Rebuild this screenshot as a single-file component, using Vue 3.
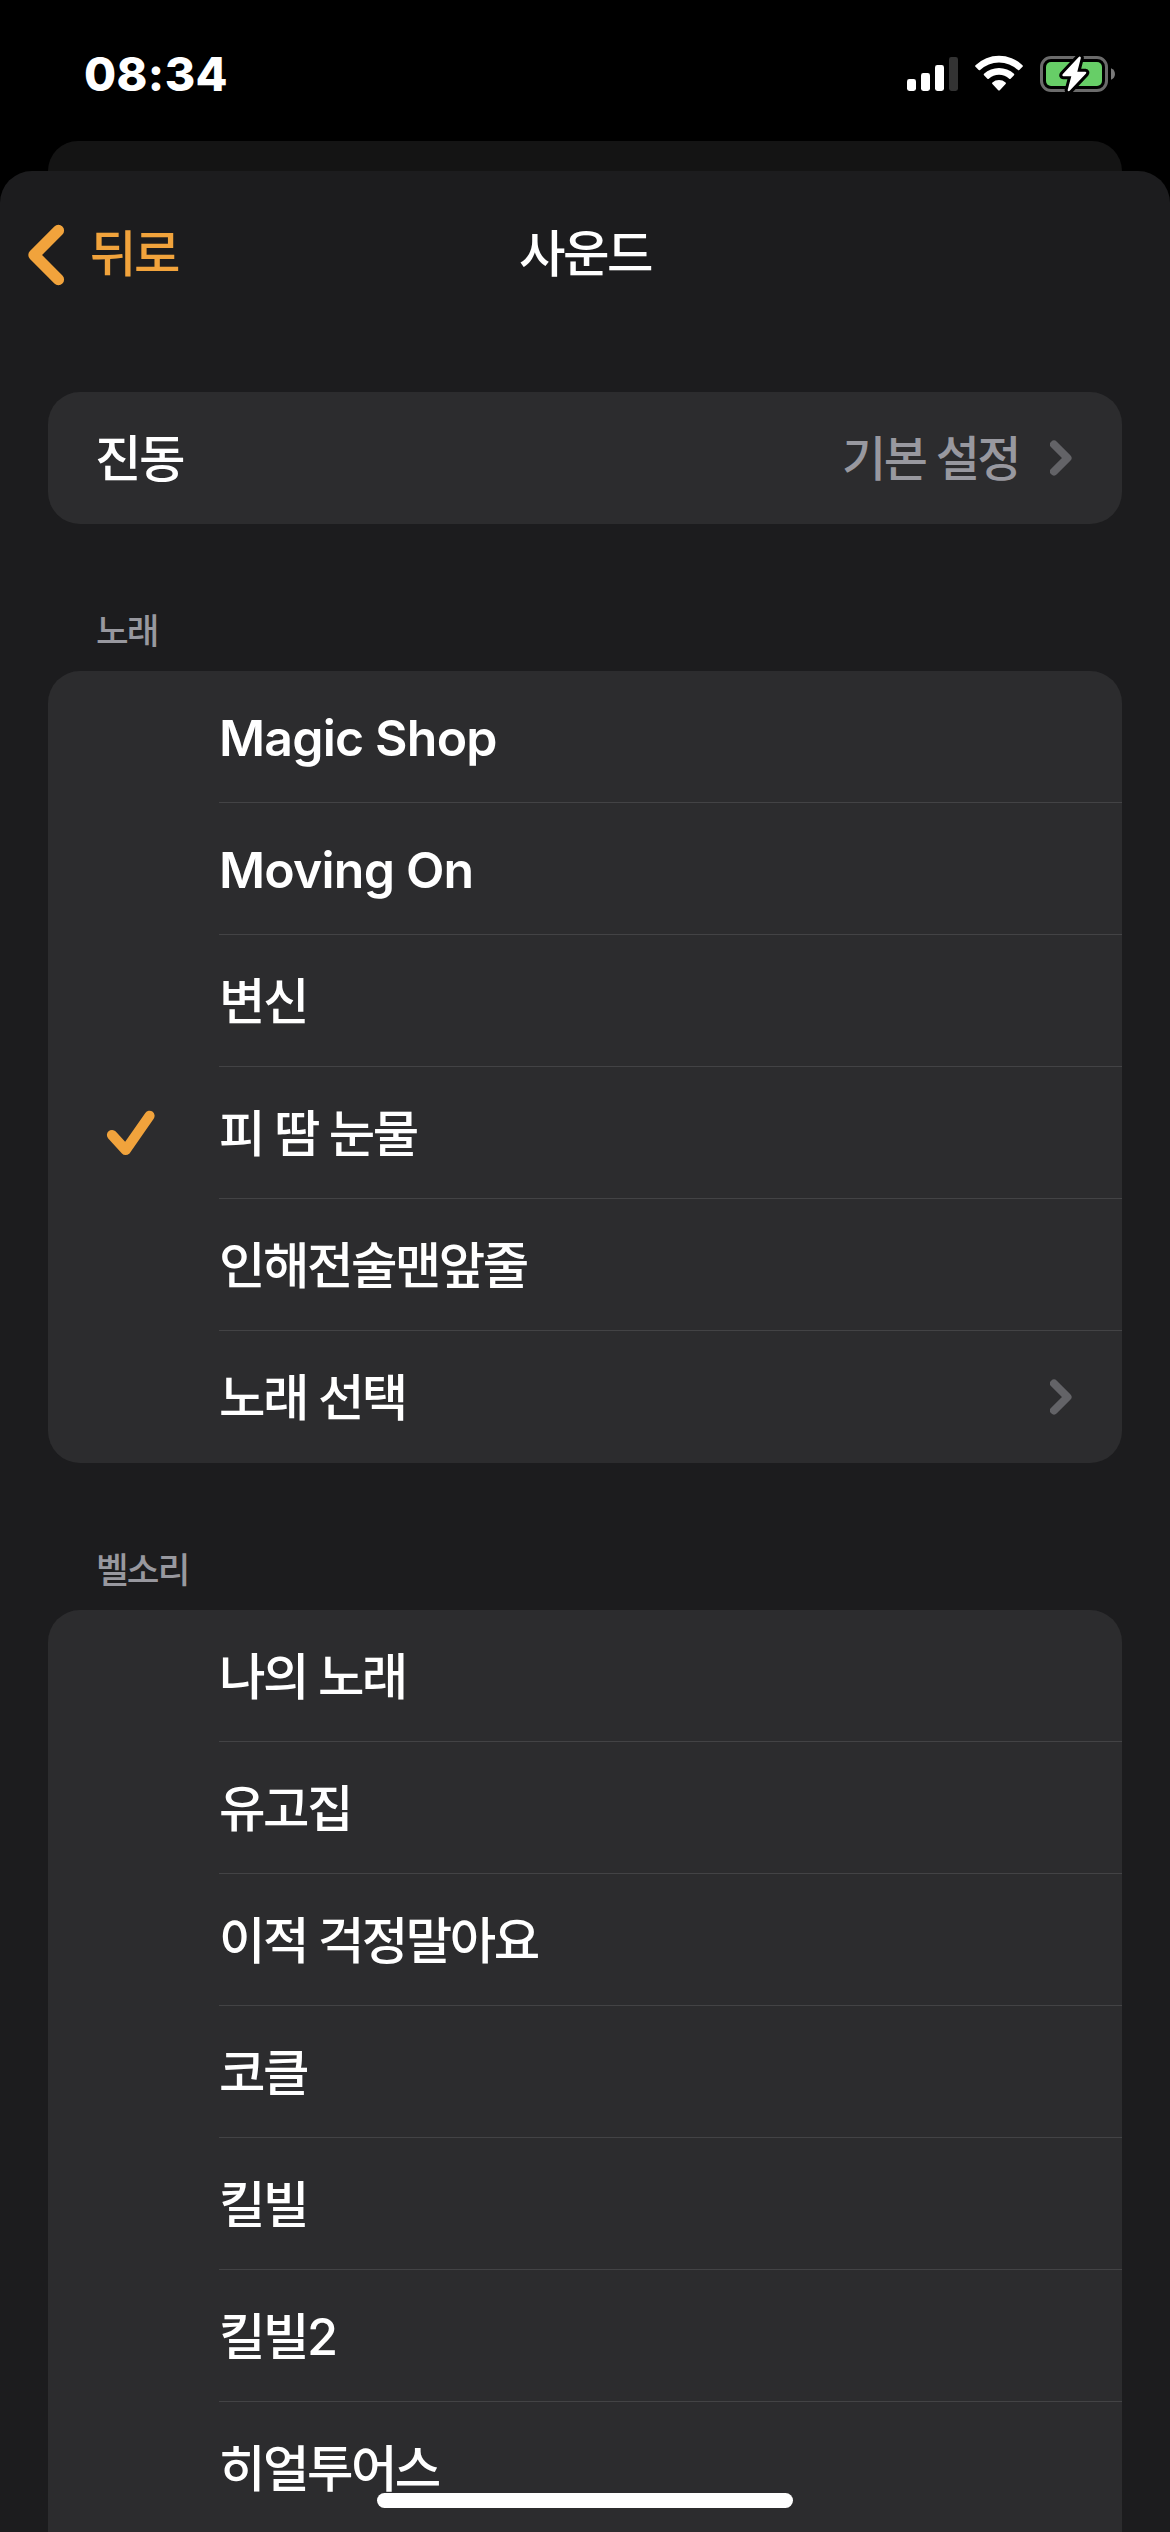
<script setup>
const songs = [
  { name: 'Magic Shop', latin: true },
  { name: 'Moving On', latin: true },
  { name: '변신' },
  { name: '피 땀 눈물', checked: true },
  { name: '인해전술맨앞줄' },
  { name: '노래 선택', more: true },
]

const ringtones = [
  { name: '나의 노래' },
  { name: '유고집' },
  { name: '이적 걱정말아요' },
  { name: '코클' },
  { name: '킬빌' },
  { name: '킬빌2' },
  { name: '히얼투어스' },
]

const sections = [
  { title: '노래', items: songs },
  { title: '벨소리', items: ringtones },
]
</script>

<template>
  <div class="screen">
    <header class="status">
      <span class="time">08:34</span>
      <div class="indicators">
        <svg class="signal" width="51" height="34" viewBox="0 0 51 34">
          <rect x="0" y="22" width="9" height="12" rx="2.4" fill="#fff" />
          <rect x="14" y="16" width="9" height="18" rx="2.4" fill="#fff" />
          <rect x="28" y="8" width="9" height="26" rx="2.4" fill="#fff" />
          <rect x="42" y="0" width="9" height="34" rx="2.4" fill="#333" />
        </svg>
        <svg class="wifi" width="48" height="36" viewBox="0 0 48 36">
          <path d="M0.5 10.2A34 34 0 0 1 47.5 10.2Q48.3 11 47.5 11.8L44.3 15Q43.6 15.6 42.9 15A27.5 27.5 0 0 0 5.1 15Q4.4 15.6 3.7 15L0.5 11.8Q-0.3 11 0.5 10.2Z" fill="#fff" />
          <path d="M9 18.8A22 22 0 0 1 39 18.8Q39.7 19.6 39 20.3L35.6 23.7Q34.9 24.3 34.2 23.7A15 15 0 0 0 13.8 23.7Q13.1 24.3 12.4 23.7L9 20.3Q8.3 19.6 9 18.8Z" fill="#fff" />
          <path d="M17.4 27.4A10.5 10.5 0 0 1 30.6 27.4Q31.4 28.2 30.6 29L24.8 35.2Q24 36 23.2 35.2L17.4 29Q16.6 28.2 17.4 27.4Z" fill="#fff" />
        </svg>
        <svg class="battery" width="76" height="40" viewBox="0 0 76 40">
          <rect x="1.5" y="3.5" width="65" height="33" rx="9.5" fill="none" stroke="#6b6b6b" stroke-width="3" />
          <path d="M71 14.2C76.3 16 76.3 24 71 25.8Z" fill="#7a7a7a" />
          <rect x="6" y="8" width="56" height="24" rx="5" fill="#67ce67" />
          <path d="M38.5 3.2L22.6 20.3Q21.6 22 23.3 22.2H31.3L27.6 36.2Q28.4 38.2 29.9 36.6L46 19.6Q47 17.9 45.3 17.7H37.3L40.9 3.8Q40 1.8 38.5 3.2Z" fill="#fff" stroke="#000" stroke-width="6" stroke-linejoin="round" paint-order="stroke" />
        </svg>
      </div>
    </header>

    <div class="backdrop"></div>

    <main class="sheet">
      <nav class="nav">
        <a class="back">
          <svg width="38" height="62" viewBox="0 0 38 62">
            <path d="M31.4 6.5L7 31L31.4 55.5" fill="none" stroke="#f1a33c" stroke-width="11.4" stroke-linecap="round" stroke-linejoin="round" />
          </svg>
          <span>뒤로</span>
        </a>
        <h1>사운드</h1>
      </nav>

      <div class="card single">
        <div class="row">
          <span class="label">진동</span>
          <span class="value">기본 설정</span>
          <svg class="chevron" width="22" height="36" viewBox="0 0 22 36">
            <path d="M4 4.5L17.5 18L4 31.5" />
          </svg>
        </div>
      </div>

      <section v-for="section in sections" :key="section.title">
        <h2>{{ section.title }}</h2>
        <div class="card list" :class="{ cut: section.title === '벨소리' }">
          <div v-for="item in section.items" :key="item.name" class="row">
            <div class="mark">
              <svg v-if="item.checked" width="50" height="46" viewBox="0 0 50 46">
                <path d="M6 25L19.7 40L43.5 5.8" fill="none" stroke="#f1a33c" stroke-width="10.2" stroke-linecap="round" stroke-linejoin="round" />
              </svg>
            </div>
            <div class="body">
              <span class="label" :class="{ latin: item.latin }">{{ item.name }}</span>
              <svg v-if="item.more" class="chevron" width="22" height="36" viewBox="0 0 22 36">
                <path d="M4 4.5L17.5 18L4 31.5" />
              </svg>
            </div>
          </div>
        </div>
      </section>
    </main>

    <div class="home"></div>
  </div>
</template>

<style>
body {
  margin: 0;
  background: #000;
}
</style>

<style scoped>
.screen {
  position: relative;
  width: 1170px;
  height: 2532px;
  overflow: hidden;
  display: flex;
  flex-direction: column;
  background: #000;
  color: #fff;
  font-family: Inter, "Noto Sans CJK KR", sans-serif;
  font-size: 50.5px;
  font-weight: 500;
  letter-spacing: -2.5px;
  white-space: nowrap;
}
.status {
  flex: none;
  height: 141px;
  display: flex;
  justify-content: space-between;
  align-items: flex-start;
  box-sizing: border-box;
  padding: 54px 54px 0 84px;
}
.time {
  font-size: 46.5px;
  line-height: 41px;
  font-weight: 800;
  letter-spacing: 0.4px;
}
.indicators {
  display: flex;
  align-items: flex-start;
}
.signal {
  margin: 3px 17px 0 0;
}
.wifi {
  margin: 1px 17px 0 0;
}
.backdrop {
  flex: none;
  height: 30px;
  margin: 0 48px;
  border-radius: 30px 30px 0 0;
  background: #141414;
}
.sheet {
  flex: 1;
  min-height: 0;
  border-radius: 32px 32px 0 0;
  background: #1c1c1e;
}
.nav {
  height: 166px;
  margin-bottom: 55px;
  display: grid;
  grid-template-columns: 1fr auto 1fr;
  align-items: center;
  line-height: 132px;
}
.back {
  display: flex;
  align-items: center;
  gap: 25px;
  padding-left: 27px;
  color: #f1a33c;
}
.back svg {
  margin-top: 2px;
}
h1 {
  margin: 0;
  font-size: inherit;
  font-weight: 500;
}
.card {
  margin: 0 48px;
  border-radius: 32px;
  background: #2c2c2e;
  overflow: hidden;
}
.cut {
  border-radius: 32px 32px 0 0;
}
.row {
  height: 132px;
  display: flex;
  align-items: center;
  line-height: 132px;
}
.single .row {
  padding: 0 50px 0 47px;
}
.label,
.value {
  padding-top: 2px;
}
.label {
  flex: 1;
}
.latin {
  font-size: 50px;
  font-weight: 600;
  letter-spacing: -0.8px;
}
.value {
  margin-right: 31px;
  color: #98989f;
  font-size: 48px;
}
.chevron {
  flex: none;
}
.chevron path {
  fill: none;
  stroke: #636367;
  stroke-width: 8;
  stroke-linecap: round;
  stroke-linejoin: round;
}
h2 {
  margin: 0;
  height: 147px;
  box-sizing: border-box;
  padding: 84px 0 0 96px;
  color: #98989f;
  font-size: 35.5px;
  line-height: 48px;
  font-weight: 500;
  letter-spacing: -1.8px;
}
.mark {
  width: 170px;
  flex: none;
  display: flex;
  align-items: center;
  padding-left: 58px;
  box-sizing: border-box;
}
.body {
  flex: 1;
  height: 132px;
  display: flex;
  align-items: center;
  box-sizing: border-box;
  margin-left: 1px;
  padding-right: 50px;
  border-bottom: 1px solid #434345;
}
.row:last-child .body {
  border-bottom: 0;
}
.home {
  position: absolute;
  left: 377px;
  bottom: 24px;
  width: 416px;
  height: 15px;
  border-radius: 8px;
  background: #fff;
}
</style>
